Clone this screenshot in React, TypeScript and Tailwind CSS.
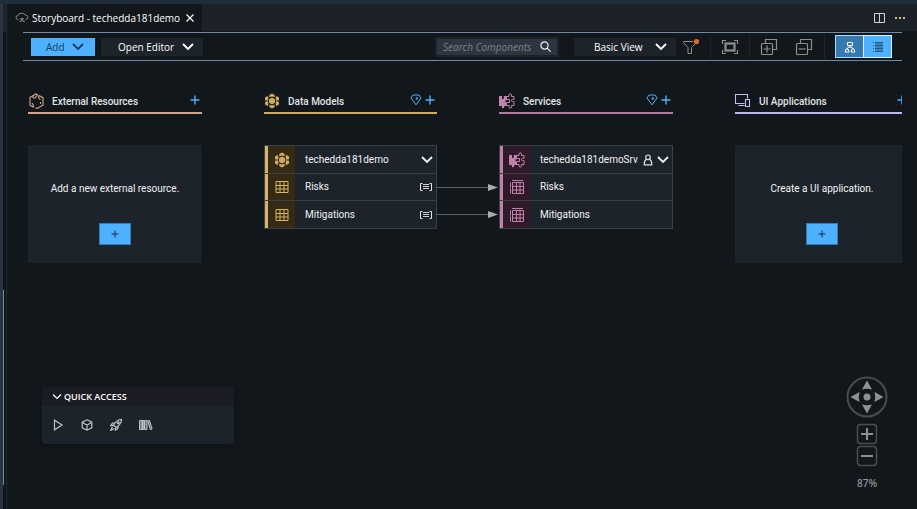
import type { ReactNode } from "react";

type IconProps = { className?: string };

function Chevron({ className = "" }: IconProps) {
  return (
    <svg viewBox="0 0 12 8" className={`h-2 w-3 shrink-0 ${className}`} fill="none" stroke="currentColor" strokeWidth="1.8" aria-hidden="true">
      <path d="M1 1l5 5 5-5" />
    </svg>
  );
}

function Plus({ className = "" }: IconProps) {
  return (
    <svg viewBox="0 0 10 10" className={`size-[10px] shrink-0 ${className}`} fill="none" stroke="currentColor" strokeWidth="1.4" aria-hidden="true">
      <path d="M5 0.5v9M0.5 5h9" />
    </svg>
  );
}

function CloudIcon() {
  return (
    <svg viewBox="0 0 14 11" className="h-[11px] w-[14px] shrink-0 text-[#85898d]" fill="none" stroke="currentColor" aria-hidden="true">
      <path d="M3.500 7.500H3a2 2 0 0 1 0-4A3.700 3 0 0 1 10 3a2.500 2.300 0 0 1 1 4.500h-.5" />
      <path d="M5 6.500l4 3M9 6.500l-4 3M6 6.500h2M4.500 9.500h2M8 9.500h2" strokeWidth="0.900" />
    </svg>
  );
}

function SwapHexIcon() {
  return (
    <svg viewBox="0 0 16 16" className="size-4 shrink-0 text-[#d3a68c]" fill="none" stroke="currentColor" strokeWidth="1.1" aria-hidden="true">
      <path d="M5.500 14.200L2 12.200V4.300L8 1l1.500.8M11 2.500l4 2.200v7.500L9 15.500l-1.500-.8" />
      <path d="M5 5V3M5 5h2M9.500 1.800L7 5M11 2.500c-1 2 0 3.500 1.500 4M12.500 11V9M5.500 14.200C6 12.500 4.500 11 4 10" />
    </svg>
  );
}

function ModelIcon() {
  return (
    <svg viewBox="0 0 16 16" className="size-4 shrink-0" fill="#d0ab62" aria-hidden="true">
      <path d="M8 4.600l3 1.700v3.400l-3 1.700-3-1.700V6.300z" />
      <path d="M8 .4l2.700 1.500v2.400L8 3.500l-2.700.8V1.900zM8 15.600l2.700-1.500v-2.400L8 12.500l-2.700-.8v2.400z" />
      <path d="M1 4.400l2.600-1.500.9 1.800-.6 3L1 7.200zM15 4.400l-2.600-1.500-.9 1.800.6 3L15 7.200zM1 11.600l2.600 1.500.9-1.800-.6-3L1 8.800zM15 11.600l-2.600 1.500-.9-1.800.6-3 2.900.5z" />
    </svg>
  );
}

function ServiceIcon() {
  return (
    <svg viewBox="0 0 16 16" className="size-4 shrink-0 text-[#bd83ad]" fill="none" stroke="currentColor" aria-hidden="true">
      <path d="M0 3h3v2.500c0 .8 1.800.8 1.800 0V3H8v4.200H6.500v2H8V13H5.200v1a1.200 1.200 0 0 1-2.400 0v-1H0z" fill="currentColor" stroke="none" />
      <path d="M8 3.500h2V2c0-1.600 2.500-1.600 2.500 0v1.500H15v2.800h-1.500c-1.500 0-1.500 2.400 0 2.400H15v3.800h-2.500V14c0 1.500-2.500 1.500-2.500 0v-1.500H8M8 6.500h2.500v3H8" />
    </svg>
  );
}

function DevicesIcon() {
  return (
    <svg viewBox="0 0 16 16" className="size-4 shrink-0 text-[#c2bdf7]" fill="none" stroke="currentColor" aria-hidden="true">
      <path d="M9.500 10.500h-9v-9h12v4M3.500 12.500h6" strokeWidth="1.100" />
      <path d="M10.500 6.500h4v7h-4z" strokeWidth="1.100" />
    </svg>
  );
}

function PinIcon() {
  return (
    <svg viewBox="0 0 12 12" className="size-3 text-[#4db1ff]" fill="none" stroke="currentColor" strokeWidth="1" aria-hidden="true">
      <path d="M3 1h6l2 3-5 6.800L1 4z" />
      <circle cx="6.800" cy="4.500" r=".8" fill="currentColor" />
    </svg>
  );
}

function TableIcon() {
  return (
    <svg viewBox="0 0 14 14" className="size-[14px] shrink-0 text-[#d9b563]" fill="none" stroke="currentColor" aria-hidden="true">
      <path d="M1 1.500h12v11H1zM5 1.500v11M9 1.500v11M1 5.500h12M1 9h12" />
    </svg>
  );
}

function StackedTableIcon() {
  return (
    <svg viewBox="0 0 16 16" className="size-4 shrink-0 text-[#bd83ad]" fill="none" stroke="currentColor" aria-hidden="true">
      <path d="M3.500 3.500h11v11h-11zM7.500 3.500v11M11 3.500v11M3.500 7.500h11M3.500 11h11M3 1.500h11" />
      <path d="M1.500 3.500v11" strokeDasharray="5 1" />
    </svg>
  );
}

function AspectIcon() {
  return (
    <svg viewBox="0 0 14 10" className="h-[10px] w-[14px] shrink-0 text-[#e2e4e6]" fill="none" stroke="currentColor" aria-hidden="true">
      <path d="M3.500 1.500h-2v7h2M10.500 1.500h2v7h-2" />
      <path d="M4 2.500h6M4 4.500h6M4 6.500h6" strokeWidth=".9" />
    </svg>
  );
}

function PersonIcon() {
  return (
    <svg viewBox="0 0 10 12" className="h-3 w-[10px] shrink-0 text-[#e2e4e6]" fill="none" stroke="currentColor" strokeWidth="1.2" aria-hidden="true">
      <circle cx="5" cy="3.300" r="2.300" />
      <path d="M3.200 5.500C1.800 6.300 1.200 7.800 1.200 10.800h7.600c0-3-.6-4.500-2-5.300" />
    </svg>
  );
}

type ColumnHeaderProps = { icon: ReactNode; title: string; line: string; pin?: boolean };

function ColumnHeader({ icon, title, line, pin }: ColumnHeaderProps) {
  return (
    <header className={`flex h-[21px] items-start border-b-2 pr-[2px] ${line}`}>
      {icon}
      <h2 className="ml-2 mt-px flex-1 text-[10px] leading-4 font-medium text-[#e2e4e6]">{title}</h2>
      {pin && (
        <button type="button" aria-label={`Pin ${title}`} className="mr-[3px] mt-px">
          <PinIcon />
        </button>
      )}
      <button type="button" aria-label={`Add to ${title}`} className="mt-[2px] text-[#4db1ff]">
        <Plus />
      </button>
    </header>
  );
}

function EmptyCard({ text }: { text: string }) {
  return (
    <div className="mt-[31px] flex h-[118px] flex-col items-center bg-[#1d232a] pt-9 font-['Roboto',sans-serif]">
      <p className="text-[10px] leading-4 text-[#f0f2f4]">{text}</p>
      <button
        type="button"
        aria-label={text}
        className="mt-[26px] flex h-[22px] w-8 items-center justify-center border border-[#347cb5] bg-[#4db1ff] text-[#16304a]"
      >
        <svg viewBox="0 0 8 8" className="size-2" stroke="currentColor" aria-hidden="true">
          <path d="M4 .5v7M.5 4h7" />
        </svg>
      </button>
    </div>
  );
}

type Entity = { name: string; icon: ReactNode; trailing?: ReactNode };
type NodeCardProps = { rows: Entity[]; accent: string; tint: string; connected?: boolean };

function NodeCard({ rows, accent, tint, connected }: NodeCardProps) {
  return (
    <ul className="mt-[31px] divide-y divide-[#3c3f44] border border-[#3c3f44] bg-[#1d232a]">
      {rows.map((row, i) => (
        <li key={row.name} className="relative flex h-[27px] items-center first:h-7">
          <span className={`w-[3px] self-stretch ${accent}`} />
          <span className={`flex w-[27px] items-center justify-center self-stretch ${tint}`}>{row.icon}</span>
          <span className="ml-[10px] flex-1 text-[10px] leading-4 text-[#f0f2f4]">{row.name}</span>
          <span className="mr-[3px] flex items-center gap-1">{row.trailing}</span>
          {connected && i > 0 && (
            <svg viewBox="0 0 62 8" className="absolute left-full top-[9px] h-2 w-[62px]" aria-hidden="true">
              <path d="M0 4.500h53" stroke="#5e6163" />
              <path d="M52 1l10 3.500L52 8z" fill="#a9abac" />
            </svg>
          )}
        </li>
      ))}
    </ul>
  );
}

const chevronButton = (label: string) => (
  <button type="button" aria-label={label} className="text-[#f0f2f4]">
    <Chevron />
  </button>
);

const models: Entity[] = [
  { name: "techedda181demo", icon: <ModelIcon />, trailing: chevronButton("Collapse techedda181demo") },
  { name: "Risks", icon: <TableIcon />, trailing: <AspectIcon /> },
  { name: "Mitigations", icon: <TableIcon />, trailing: <AspectIcon /> },
];

const services: Entity[] = [
  {
    name: "techedda181demoSrv",
    icon: <ServiceIcon />,
    trailing: (
      <>
        <PersonIcon />
        {chevronButton("Collapse techedda181demoSrv")}
      </>
    ),
  },
  { name: "Risks", icon: <StackedTableIcon /> },
  { name: "Mitigations", icon: <StackedTableIcon /> },
];

function TabBar() {
  return (
    <div className="flex h-[27px] shrink-0 items-stretch bg-[#1d2229] text-[#d0d3d6]">
      <div className="flex w-[195px] items-center bg-[#12171b] pl-2">
        <CloudIcon />
        <span className="ml-[3px] flex-1 whitespace-nowrap text-[10px] leading-4 text-white">Storyboard - techedda181demo</span>
        <button type="button" aria-label="Close tab" className="mr-2 text-white">
          <svg viewBox="0 0 8 8" className="size-2" stroke="currentColor" strokeWidth="1.2" aria-hidden="true">
            <path d="M.5.5l7 7M7.500.5l-7 7" />
          </svg>
        </button>
      </div>
      <div className="ml-auto flex items-center gap-2 pr-[11px]">
        <button type="button" aria-label="Split editor">
          <svg viewBox="0 0 12 12" className="size-3" fill="none" stroke="currentColor" aria-hidden="true">
            <path d="M.5 1.500h10v9H.5zM5.500 1.500v9" />
          </svg>
        </button>
        <button type="button" aria-label="More actions">
          <svg viewBox="0 0 12 4" className="h-1 w-3" fill="#d6b68a" aria-hidden="true">
            <path d="M1 1h2v2H1zM5 1h2v2H5zM9 1h2v2H9z" />
          </svg>
        </button>
      </div>
    </div>
  );
}

function Toolbar() {
  return (
    <div role="toolbar" className="ml-4 mr-[15px] mt-px flex h-[29px] shrink-0 items-center border-y border-[#7089a6] pl-2 text-[10px] leading-4">
      <button type="button" className="flex h-[18px] w-16 items-center justify-between bg-[#4db1ff] pl-[15px] pr-[11px] text-[#1b3a56]">
        Add
        <Chevron />
      </button>
      <button type="button" className="ml-[6px] flex h-[18px] w-[102px] items-center justify-between bg-[#1d232a] pl-[17px] pr-[9px] text-white">
        Open Editor
        <Chevron />
      </button>
      <div className="ml-auto flex h-5 w-[124px] items-center border-2 border-[#1d232a] bg-[#2d3541] px-[6px]">
        <input
          type="text"
          aria-label="Search components"
          placeholder="Search Components"
          className="h-4 min-w-0 flex-1 bg-transparent leading-4 italic text-white outline-none placeholder:text-[#7d8186] placeholder:opacity-100"
        />
        <svg viewBox="0 0 11 11" className="size-[11px] shrink-0 text-[#f0f2f4]" fill="none" stroke="currentColor" strokeWidth="1.2" aria-hidden="true">
          <circle cx="4.500" cy="4.500" r="3.600" />
          <path d="M7.200 7.200l3.400 3.400" />
        </svg>
      </div>
      <div className="relative ml-[15px] h-[18px] w-[102px] text-white">
        <select aria-label="View" className="size-full appearance-none bg-[#1d232a] pl-5 pr-6">
          <option>Basic View</option>
        </select>
        <Chevron className="pointer-events-none absolute right-[9px] top-[5px]" />
      </div>
      <button type="button" aria-label="Filter" className="ml-[6px] text-[#8c8f92]">
        <svg viewBox="0 0 18 16" className="h-4 w-[18px]" fill="none" stroke="currentColor" aria-hidden="true">
          <path d="M11 2.500H1.500v1L6 8.500v6h3.500v-6L14 4" />
          <circle cx="14.500" cy="2.600" r="2.600" fill="#e0682f" stroke="none" />
        </svg>
      </button>
      <div className="ml-[10px] h-6 w-px bg-[#1d232a]" />
      <button type="button" aria-label="Fit to screen" className="ml-[10px] text-[#8c8f92]">
        <svg viewBox="0 0 18 16" className="h-4 w-[18px]" fill="none" stroke="currentColor" aria-hidden="true">
          <path d="M1.500 5V1.500H5M13 1.500h3.500V5M16.500 11v3.500H13M5 14.500H1.500V11" strokeWidth="1.200" />
          <rect x="4.500" y="4.500" width="9" height="7" strokeWidth="2.200" />
        </svg>
      </button>
      <div className="ml-[10px] h-6 w-px bg-[#1d232a]" />
      <button type="button" aria-label="Expand all" className="ml-[10px] text-[#8c8f92]">
        <svg viewBox="0 0 18 18" className="size-[18px]" fill="none" stroke="currentColor" strokeWidth="1.2" aria-hidden="true">
          <path d="M5.500 5.500v-4h11v10h-4" />
          <rect x="1.500" y="5.500" width="11" height="11" rx="1" />
          <path d="M3.500 11h7M7 7.500v7" />
        </svg>
      </button>
      <button type="button" aria-label="Collapse all" className="ml-[17px] text-[#8c8f92]">
        <svg viewBox="0 0 18 18" className="size-[18px]" fill="none" stroke="currentColor" strokeWidth="1.2" aria-hidden="true">
          <path d="M5.500 5.500v-4h11v10h-4" />
          <rect x="1.500" y="5.500" width="11" height="11" rx="1" />
          <path d="M3.500 11h7" />
        </svg>
      </button>
      <div className="ml-[11px] h-6 w-px bg-[#1d232a]" />
      <div className="ml-[10px] mr-[10px] flex h-[23px] w-[57px]">
        <button type="button" aria-label="Diagram view" aria-pressed="true" className="flex w-7 items-center justify-center border border-r-0 border-[#a8dcff] bg-[#3679b0] text-white">
          <svg viewBox="0 0 12 12" className="size-3" fill="none" stroke="currentColor" aria-hidden="true">
            <path d="M3.500 1.500h5v3h-5zM6 4.500v2M3 8l1.500-2h3L9 8" />
            <path d="M1 11l1-3h2l1 3zM7 11l1-3h2l1 3z" />
          </svg>
        </button>
        <button type="button" aria-label="List view" className="flex flex-1 items-center justify-center border border-[#e2f2ff] bg-[#4db1ff] text-[#245988]">
          <svg viewBox="0 0 10 10" className="size-[10px]" stroke="currentColor" aria-hidden="true">
            <path d="M0 .5h1M2 .5h8M0 3.500h1M2 3.500h8M0 6.500h1M2 6.500h8M0 9.500h1M2 9.500h8M2 2h8M2 5h8M2 8h8" />
          </svg>
        </button>
      </div>
    </div>
  );
}

function QuickAccess() {
  return (
    <section className="absolute bottom-[65px] left-[35px] w-48 overflow-hidden rounded-sm bg-[#1d232a] shadow-md">
      <h2 className="bg-[#1b1c23]">
        <button type="button" className="flex h-[19px] w-full items-center gap-[2px] pl-[10px] pt-px text-[9px] leading-4 font-semibold text-white">
          <svg viewBox="0 0 10 6" className="h-[6px] w-[10px]" fill="none" stroke="currentColor" strokeWidth="1.2" aria-hidden="true">
            <path d="M1 .5l4 4 4-4" />
          </svg>
          QUICK ACCESS
        </button>
      </h2>
      <div className="flex h-[38px] items-center gap-[17px] pl-[10px] text-[#bfc2c5]">
        <button type="button" aria-label="Run">
          <svg viewBox="0 0 12 12" className="size-3" fill="none" stroke="currentColor" strokeWidth="1.2" aria-hidden="true">
            <path d="M2.500 1.200v9.600L10 6z" />
          </svg>
        </button>
        <button type="button" aria-label="Build">
          <svg viewBox="0 0 12 12" className="size-3" fill="none" stroke="currentColor" strokeWidth="1.200" aria-hidden="true">
            <path d="M6 .8l4.800 2.400v5.600L6 11.200 1.200 8.800V3.200zM1.200 3.500L6 6l4.800-2.500M6 6v5" />
          </svg>
        </button>
        <button type="button" aria-label="Deploy">
          <svg viewBox="0 0 12 12" className="size-3" fill="none" stroke="currentColor" strokeWidth="1.200" aria-hidden="true">
            <path d="M11.500.5C8.500.5 6.500 1.500 3.500 6l2.500 2.500C10.500 5.500 11.500 3.500 11.500.5zM5 4H2.500L.8 6.500l2.700-.3M8 7v2.500l-2.500 1.700.3-2.700M2.500 7.500L.7 11.300l3.800-1.800" />
            <circle cx="8.300" cy="3.700" r=".9" />
          </svg>
        </button>
        <button type="button" aria-label="Library">
          <svg viewBox="0 0 14 12" className="h-3 w-[14px]" fill="#6f7377" stroke="currentColor" aria-hidden="true">
            <path d="M.5 1.500H3v9H.5zM3.500 1.500H5v9H3.500zM5.500 1.500H8v9H5.500zM8.700 2l1.800-.5 2.600 8.500-1.800.6z" />
          </svg>
        </button>
      </div>
    </section>
  );
}

function Navigator() {
  return (
    <div className="absolute bottom-[18px] right-[29px] flex w-[42px] flex-col items-center text-[#8e9193]">
      <button type="button" aria-label="Pan">
        <svg viewBox="0 0 42 42" className="size-[42px]" fill="currentColor" aria-hidden="true">
          <circle cx="21" cy="21" r="19.500" fill="none" stroke="#4a4c4f" strokeWidth="2" />
          <circle cx="21" cy="21" r="3.500" />
          <path d="M21 4.500l5 9q-5-1.500-10 0zM21 37.500l5-9q-5 1.500-10 0zM4.500 21l9-5q-1.500 5 0 10zM37.500 21l-9-5q1.500 5 0 10z" />
        </svg>
      </button>
      <button type="button" aria-label="Zoom in" className="mt-[5px]">
        <svg viewBox="0 0 22 22" className="size-[22px]" fill="none" stroke="currentColor" strokeWidth="2" aria-hidden="true">
          <rect x="1.500" y="1.500" width="19" height="19" rx="3" stroke="#4a4c4f" strokeWidth="1.500" />
          <path d="M5 11h12M11 5v12" />
        </svg>
      </button>
      <button type="button" aria-label="Zoom out">
        <svg viewBox="0 0 22 22" className="size-[22px]" fill="none" stroke="currentColor" strokeWidth="2" aria-hidden="true">
          <rect x="1.500" y="1.500" width="19" height="19" rx="3" stroke="#4a4c4f" strokeWidth="1.500" />
          <path d="M5 11h12" />
        </svg>
      </button>
      <output className="mt-2 text-[10px] leading-4 font-semibold">87%</output>
    </div>
  );
}

export default function App() {
  return (
    <div className="flex h-screen flex-col overflow-hidden border-t-4 border-[#1f2d3d] bg-[#12171b] font-['Open_Sans','Noto_Sans',sans-serif]">
      <div className="flex min-h-0 flex-1">
        <aside className="flex w-[7px] shrink-0 border-r border-[#23282d]">
          <div className="w-[3px] bg-[#2b3442]" />
          <div className="flex w-[3px] flex-col">
            <div className="h-[28px] bg-[#1d2229]" />
            <div className="mb-6 mt-auto h-[195px] w-px bg-[#7089a6]" />
          </div>
        </aside>
        <main className="relative flex min-w-0 flex-1 flex-col">
          <TabBar />
          <Toolbar />
          <div className="ml-4 mr-[15px] flex-1 overflow-hidden pl-[5px] pt-8 font-['Roboto',sans-serif]">
            <div className="grid grid-cols-[174px_173px_174px_174px] gap-x-[62px]">
              <section>
                <ColumnHeader icon={<SwapHexIcon />} title="External Resources" line="border-[#d3a68c]" />
                <EmptyCard text="Add a new external resource." />
              </section>
              <section>
                <ColumnHeader icon={<ModelIcon />} title="Data Models" line="border-[#d0ab5c]" pin />
                <NodeCard rows={models} accent="bg-[#d6b36a]" tint="bg-[#352a13]" connected />
              </section>
              <section>
                <ColumnHeader icon={<ServiceIcon />} title="Services" line="border-[#b47ca4]" pin />
                <NodeCard rows={services} accent="bg-[#bd83ad]" tint="bg-[#301a29]" />
              </section>
              <section>
                <ColumnHeader icon={<DevicesIcon />} title="UI Applications" line="border-[#bdb8f0]" />
                <EmptyCard text="Create a UI application." />
              </section>
            </div>
          </div>
          <QuickAccess />
          <Navigator />
        </main>
      </div>
    </div>
  );
}
